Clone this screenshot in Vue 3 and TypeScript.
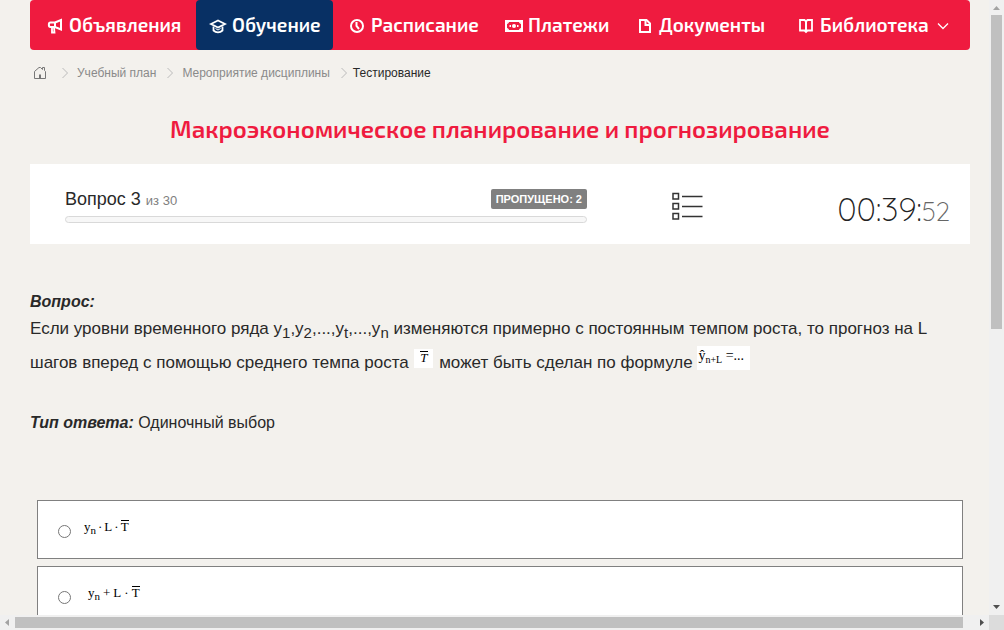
<script setup lang="ts">
import { ref } from 'vue'

interface NavItem {
  label: string
  icon: string
  active?: boolean
  dropdown?: boolean
}

const navItems: NavItem[] = [
  { label: 'Объявления', icon: 'horn' },
  { label: 'Обучение', icon: 'cap', active: true },
  { label: 'Расписание', icon: 'clock' },
  { label: 'Платежи', icon: 'money' },
  { label: 'Документы', icon: 'doc' },
  { label: 'Библиотека', icon: 'book', dropdown: true },
]

const crumbs = ['Учебный план', 'Мероприятие дисциплины']
const answers = [
  { id: 'a1', sign: '·' },
  { id: 'a2', sign: '+' },
]
const selected = ref('')
</script>

<template>
  <div class="window">
    <div class="viewport">
      <nav class="menu">
        <a
          v-for="item in navItems"
          :key="item.label"
          href="#"
          class="menu-item"
          :class="{ active: item.active }"
        >
          <svg class="menu-icon" viewBox="0 0 18 18" fill="none" stroke="#fff" stroke-width="2">
            <template v-if="item.icon === 'horn'">
              <path d="M9 5.500H4.500C2.300 5.500 2.300 10 4.500 10H9L15 12.500V3L9 5.500V10" />
              <path d="M6 10V15.500H8.500L8 10.500" stroke-width="1.800" />
            </template>
            <template v-else-if="item.icon === 'cap'">
              <path d="M2 7L9 3.500L16 7L9 10.500Z" stroke-width="1.800" />
              <path d="M4.500 9.500V13.500C7 16 11 16 13.500 13.500V9.500" stroke-width="1.800" />
              <path d="M6.500 11.500L9 13L11.500 11.500" stroke-width="1" />
            </template>
            <template v-else-if="item.icon === 'clock'">
              <circle cx="9" cy="9" r="6" />
              <path d="M8.500 5V9L11 12" />
            </template>
            <template v-else-if="item.icon === 'money'">
              <rect x="1" y="4" width="16" height="10" />
              <circle cx="9" cy="9" r="2" fill="#fff" stroke="none" />
              <path d="M4.500 9H6M12 9H13.500" />
              <path d="M2 6.500L3.500 5M14.500 5L16 6.500M2 11.500L3.500 13M14.500 13L16 11.500" stroke-width="1.500" />
            </template>
            <template v-else-if="item.icon === 'doc'">
              <path d="M4 3H10.500L14 6.500V15H4Z" />
              <path d="M9.500 3V8H14" />
            </template>
            <template v-else>
              <path d="M3 3H7.500L9 4.500L10.500 3H15V13.500H10.500L9 15L7.500 13.500H3Z" stroke-width="1.800" />
              <path d="M9 4V15" />
            </template>
          </svg>
          <span>{{ item.label }}</span>
          <svg v-if="item.dropdown" class="caret" viewBox="0 0 12 8" fill="none" stroke="#fff" stroke-width="1.300">
            <path d="M1 1.500L6 6.500L11 1.500" />
          </svg>
        </a>
      </nav>

      <nav class="crumbs">
        <a href="#" aria-label="Главная" class="home">
          <svg viewBox="0 0 14 14" fill="none" stroke="#777" stroke-width="1">
            <path d="M1.500 5.500L6 1.500H7.500L9.500 3.500V1.500H11.500V4.500L12.500 5.500V12.500H1.500Z" />
            <path d="M7 8.500V12.500" stroke-width="2" />
          </svg>
        </a>
        <template v-for="crumb in crumbs" :key="crumb">
          <svg class="chevron" viewBox="0 0 8 12" fill="none" stroke="#bbb"><path d="M1.500 1L6.500 6L1.500 11" /></svg>
          <a href="#">{{ crumb }}</a>
        </template>
        <svg class="chevron last" viewBox="0 0 8 12" fill="none" stroke="#bbb"><path d="M1.500 1L6.500 6L1.500 11" /></svg>
        <span class="current">Тестирование</span>
      </nav>

      <h1>Макроэкономическое планирование и прогнозирование</h1>

      <section class="panel">
        <div class="progress">
          <div class="progress-head">
            <div class="count">Вопрос 3 <small>из 30</small></div>
            <span class="badge">ПРОПУЩЕНО: 2</span>
          </div>
          <div class="bar"></div>
        </div>
        <button class="list" type="button" aria-label="Список вопросов">
          <svg viewBox="0 0 32 30" fill="none" stroke="#333" stroke-width="1.500">
            <path d="M1 1.500H6.500V7H1ZM1 11.500H6.500V17H1ZM1 21.500H6.500V27H1Z" />
            <path d="M10 4.500H30.500M10 14.500H30.500M10 24.500H30.500" />
          </svg>
        </button>
        <div class="timer">00:39:<span>52</span></div>
      </section>

      <main>
        <p class="label">Вопрос:</p>
        <p class="question">
          Если уровни временного ряда y<sub>1</sub>,y<sub>2</sub>,...,y<sub>t</sub>,...,y<sub>n</sub>
          изменяются примерно с постоянным темпом роста, то прогноз на L шагов вперед с помощью
          среднего темпа роста <span class="formula mean"><i class="over">T</i></span> может быть
          сделан по формуле
          <span class="formula forecast">ŷ<small>n+L</small> =...</span>
        </p>
        <p class="type"><span class="label">Тип ответа:</span> Одиночный выбор</p>

        <div class="answers">
          <label v-for="answer in answers" :key="answer.id" class="answer" :class="answer.id">
            <input v-model="selected" type="radio" name="answer" :value="answer.id" />
            <span class="math">
              <span>y<small>n</small></span>
              <span>{{ answer.sign }}</span>
              <span>L</span>
              <span>·</span>
              <span class="over">T</span>
            </span>
          </label>
        </div>
      </main>
    </div>

    <div class="scroll vertical">
      <svg viewBox="0 0 15 15"><path d="M4 10L7.500 6L11 10Z" fill="#a3a3a3" /></svg>
      <div class="thumb"></div>
      <div class="track"></div>
      <svg viewBox="0 0 15 15"><path d="M4 5L7.500 9L11 5Z" fill="#505050" /></svg>
    </div>
    <div class="scroll horizontal">
      <svg viewBox="0 0 15 15"><path d="M9 4L5 7.500L9 11Z" fill="#a3a3a3" /></svg>
      <div class="thumb"></div>
      <div class="track"></div>
      <svg viewBox="0 0 15 15"><path d="M6 4L10 7.500L6 11Z" fill="#505050" /></svg>
    </div>
    <div class="corner"></div>
  </div>
</template>

<style>
body {
  margin: 0;
  overflow: hidden;
}
</style>

<style scoped>
* {
  box-sizing: border-box;
}
.window {
  display: grid;
  grid-template-columns: minmax(0, 1fr) 15px;
  grid-template-rows: minmax(0, 1fr) 15px;
  height: 100vh;
  background: #f3f1ed;
  color: #292929;
  font-family: "Liberation Sans", Arial, sans-serif;
  font-size: 16px;
}
.viewport {
  overflow: hidden;
  padding: 0 19px 0 30px;
}
a {
  color: inherit;
  text-decoration: none;
}
p,
h1 {
  margin: 0;
}
.menu {
  display: grid;
  grid-template-columns: 166fr 139fr 157fr 131fr 161fr 186fr;
  height: 50px;
  border-radius: 4px;
  background: #ef1b3f;
  color: #fff;
  font: 600 19px/50px "Exo 2", "Open Sans", sans-serif;
}
.menu-item {
  display: flex;
  align-items: center;
  gap: 5px;
  padding-left: 13px;
  white-space: nowrap;
}
.menu-item:first-child {
  padding-left: 16px;
}
.menu-item.active {
  margin-right: 2px;
  border-radius: 4px;
  background: #083064;
}
.menu-icon {
  flex: none;
  width: 18px;
  height: 18px;
  margin-top: 2px;
}
.caret {
  width: 12px;
  height: 8px;
  margin: 2px 0 0 3px;
}
.crumbs {
  display: flex;
  align-items: center;
  height: 46px;
  padding-left: 3px;
  color: #8a8a8a;
  font-size: 12px;
}
.home {
  display: flex;
  width: 14px;
  margin-right: 4px;
}
.home svg {
  width: 14px;
  height: 14px;
}
.chevron {
  width: 8px;
  height: 12px;
  margin: 0 8px 0 10px;
}
.chevron.last {
  margin-right: 5px;
}
.current {
  color: #292929;
}
h1 {
  margin-top: 15px;
  color: #ef1b3f;
  font: 600 24px/36px "Exo 2", "Open Sans", sans-serif;
  text-align: center;
}
.panel {
  display: flex;
  align-items: center;
  height: 80px;
  margin-top: 17px;
  padding: 0 20px 0 35px;
  background: #fff;
}
.progress {
  flex: 0 1 522px;
  padding-top: 4px;
}
.progress-head {
  display: flex;
  align-items: center;
  justify-content: space-between;
  height: 20px;
}
.count {
  font-size: 18px;
}
.count small {
  color: #808080;
  font-size: 13px;
}
.badge {
  padding: 0 5px;
  border-radius: 2px;
  background: #808080;
  color: #fff;
  font-size: 11px;
  font-weight: bold;
  line-height: 20px;
}
.bar {
  height: 7px;
  margin-top: 7px;
  border: 1px solid #d9d9d9;
  border-radius: 4px;
  background: #f7f7f7;
}
.list {
  display: flex;
  margin-left: 85px;
  padding: 5px 0 0;
  border: 0;
  background: none;
}
.list svg {
  width: 32px;
  height: 30px;
}
.timer {
  margin-left: auto;
  padding-top: 12px;
  color: #222;
  font: 300 33px/40px Quicksand, Lato, sans-serif;
}
.timer span {
  color: #666;
  font-size: 26px;
}
main {
  padding-top: 48px;
}
.label {
  font-weight: bold;
  font-style: italic;
  line-height: 20px;
}
.question {
  font-size: 17px;
  line-height: 34px;
}
.question sub {
  font-size: 15px;
  line-height: 15px;
}
.formula {
  display: inline-block;
  background: #fff;
  color: #000;
  font-family: "Liberation Serif", serif;
  font-size: 13px;
}
.mean {
  width: 19px;
  height: 19px;
  margin: 0 1px;
  line-height: 17px;
  text-align: center;
  vertical-align: 6px;
}
.forecast {
  width: 53px;
  height: 24px;
  padding-left: 1px;
  font-size: 14px;
  line-height: 20px;
  vertical-align: top;
  white-space: nowrap;
}
small {
  font-size: 10px;
}
.formula small,
.math small {
  position: relative;
  top: 3px;
}
.over {
  display: inline-block;
  border-top: 1px solid #000;
  line-height: 11px;
}
.type {
  margin-top: 33px;
  line-height: 20px;
}
.answers {
  display: grid;
  gap: 7px;
  margin-top: 67px;
  padding: 0 7px;
}
.answer {
  display: flex;
  align-items: center;
  height: 59px;
  padding-left: 20px;
  border: 1px solid #808080;
  background: #fff;
}
.answer input {
  width: 13px;
  height: 13px;
  margin: 4px 13px 0 0;
}
.math {
  display: flex;
  align-items: baseline;
  gap: 2px;
  padding-bottom: 6px;
  color: #000;
  font: 13px/15px "Liberation Serif", serif;
}
.math small {
  font-size: 11px;
}
.a2 .math {
  gap: 3px;
  padding-left: 4px;
}
.scroll {
  display: flex;
  background: #f0f0f0;
}
.scroll svg {
  flex: none;
  width: 15px;
  height: 15px;
}
.thumb {
  background: #c0c0c0;
}
.vertical {
  flex-direction: column;
}
.vertical .thumb {
  flex: 314;
  margin: 0 2px;
}
.vertical .track {
  flex: 271;
}
.horizontal .thumb {
  flex: 948;
  margin: 2px 0;
}
.horizontal .track {
  flex: 11;
}
.corner {
  background: #dcdcdc;
}
</style>
